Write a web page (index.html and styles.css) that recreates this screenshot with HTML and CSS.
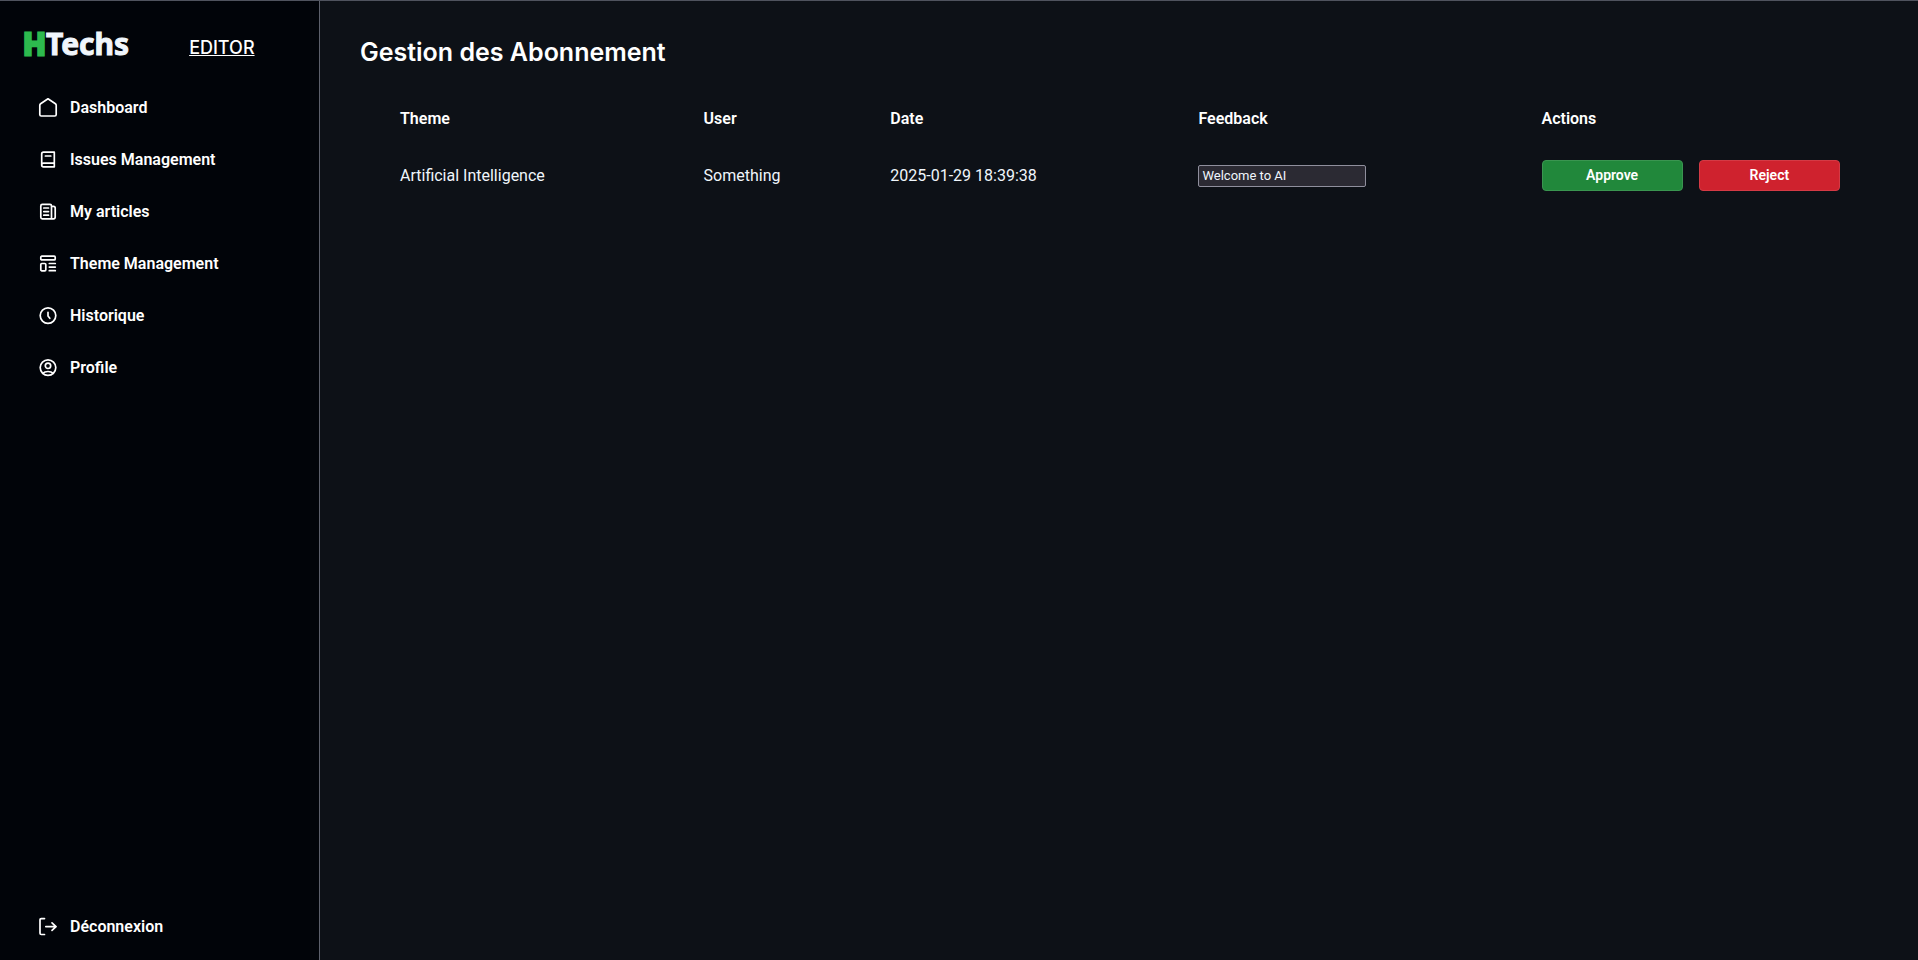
FILE: index.html
```html
<!DOCTYPE html>
<html lang="fr">
<head>
<meta charset="utf-8">
<meta name="viewport" content="width=device-width, initial-scale=1">
<title>HTechs</title>
<link rel="stylesheet" href="styles.css">
</head>
<body>
<div class="app">
  <aside class="sidebar">
    <header class="brand">
      <a class="logo" href="#"><span class="logo-mark">H</span><span class="logo-name">Techs</span></a>
      <a class="role" href="#">EDITOR</a>
    </header>
    <nav class="menu">
      <a class="menu-item" href="#"><svg class="icon" viewBox="0 0 20 20"><path d="M1.800 7.300Q1.800 6.300 2.600 5.700L10 .8l7.400 4.900q.8.600.8 1.600v9.300q0 1.400-1.400 1.400H3.200q-1.400 0-1.400-1.400z"/></svg>Dashboard</a>
      <a class="menu-item" href="#"><svg class="icon" viewBox="0 0 20 20"><path d="M3.700 15V4q0-1.800 1.800-1.800h10.800v14.600H5.500q-1.800 0-1.800-1.800 0-1.900 1.800-1.900h10.800M7.400 6h5.400"/></svg>Issues Management</a>
      <a class="menu-item" href="#"><svg class="icon" viewBox="0 0 20 20"><path d="M13.500 16.800H4.300q-1.500 0-1.500-1.500V3.900q0-1.500 1.500-1.500h7.700q1.500 0 1.500 1.500zM13.500 4.400h2q1.700 0 1.700 1.700v9q0 1.700-1.700 1.700h-2M5.800 6h4.700M5.800 9.600h4.700M5.800 13.200h4.700"/></svg>My articles</a>
      <a class="menu-item" href="#"><svg class="icon" viewBox="0 0 20 20"><rect x="2.800" y="2.200" width="14.400" height="3.700" rx="1"/><rect x="2.800" y="9.500" width="5" height="7.300" rx="1"/><path d="M11.300 9.500h6M11.300 13.100h6M11.300 16.700h6"/></svg>Theme Management</a>
      <a class="menu-item" href="#"><svg class="icon" viewBox="0 0 20 20"><circle cx="10" cy="9.600" r="7.800"/><path d="M10 6.300v3.700l1.800 2.300"/></svg>Historique</a>
      <a class="menu-item" href="#"><svg class="icon" viewBox="0 0 20 20"><circle cx="10" cy="9.600" r="7.800"/><circle cx="10" cy="7.800" r="2.700"/><path d="M4.800 15.300q1.800-1.800 5.200-1.800t5.200 1.800"/></svg>Profile</a>
      <a class="menu-item menu-item-last" href="#"><svg class="icon" viewBox="0 0 20 20"><path d="M6.500 1.600H3.300Q2 1.600 2 2.900v13.300q0 1.300 1.300 1.300h3.200M7.800 9.600h10.300M14 5.800l4 3.800-4 3.800"/></svg>Déconnexion</a>
    </nav>
  </aside>
  <main class="content">
    <h1 class="title">Gestion des Abonnement</h1>
    <table class="requests">
      <colgroup><col class="col-theme"><col class="col-user"><col class="col-date"><col class="col-feedback"><col class="col-actions"></colgroup>
      <thead>
        <tr><th scope="col">Theme</th><th scope="col">User</th><th scope="col">Date</th><th scope="col" id="feedback">Feedback</th><th scope="col">Actions</th></tr>
      </thead>
      <tbody>
        <tr>
          <td>Artificial Intelligence</td><td>Something</td><td>2025-01-29 18:39:38</td>
          <td><input class="feedback" type="text" value="Welcome to AI" aria-labelledby="feedback"></td>
          <td><div class="actions"><button class="btn btn-approve" type="button">Approve</button><button class="btn btn-reject" type="button">Reject</button></div></td>
        </tr>
      </tbody>
    </table>
  </main>
</div>
</body>
</html>
```
FILE: styles.css
```css
* { box-sizing: border-box; }
body {
  margin: 0;
  background: #0d1117;
  color: #fff;
  font: 16px/24px Roboto, "Liberation Sans", sans-serif;
}
a { color: inherit; text-decoration: none; }
.app {
  display: flex;
  min-height: 100vh;
  border-top: 1px solid #4f535e;
}
.sidebar {
  display: flex;
  flex-direction: column;
  flex: 0 0 320px;
  background: #010409;
  border-right: 1px solid #5c606b;
}
.brand {
  display: flex;
  align-items: flex-end;
  gap: 60px;
  padding: 23px 23px 20px;
}
.logo {
  display: flex;
  font: 700 30px/40px "Noto Sans", sans-serif;
}
.logo-mark { color: #2dba4e; -webkit-text-stroke: 3px #2dba4e; }
.logo-name {
  color: #f0f6fc;
  -webkit-text-stroke: 1px #f0f6fc;
  stroke-linejoin: round;
}
.role {
  padding-bottom: 4px;
  font: 500 18px/24px Inter, sans-serif;
  text-decoration: underline;
}
.menu { display: flex; flex-direction: column; flex: 1; gap: 4px; }
.menu-item {
  display: flex;
  align-items: center;
  gap: 12px;
  padding: 12px 38px;
  font-weight: 600;
}
.menu-item-last { margin-top: auto; margin-bottom: 9px; }
.icon {
  width: 20px;
  height: 20px;
  fill: none;
  stroke: #fff;
  stroke-width: 1.7;
  stroke-linecap: round;
  stroke-linejoin: round;
}
.content { flex: 1; padding: 32px 40px; }
.title { margin: 0; font: 600 25px/38px Inter, sans-serif; }
.requests {
  width: 100%;
  margin-top: 20px;
  border-collapse: collapse;
  table-layout: fixed;
}
.requests th, .requests td { padding: 16px 0 17px 40px; text-align: left; }
.requests td { padding-top: 12px; padding-bottom: 12px; color: #f0f6fc; }
.requests th { font-weight: 600; }
.col-theme { width: 20%; }
.col-user { width: 12.3%; }
.col-date { width: 20.3%; }
.col-feedback { width: 22.6%; }
.feedback {
  display: block;
  width: 168px;
  height: 22px;
  padding: 0 3px;
  border: 1px solid #8f8f9d;
  border-radius: 2px;
  background: #2b2a33;
  color: #f0f6fc;
  font: 13px/20px Roboto, sans-serif;
}
.actions { display: flex; gap: 16px; padding-right: 38px; }
.btn {
  flex: 1;
  padding: 5px 16px;
  border: 1px solid #3a9550;
  border-radius: 4px;
  background: #21883b;
  color: #fff;
  font: 600 14px/19px Roboto, sans-serif;
}
.btn-reject { border-color: #d43a45; background: #cf222e; }
```
